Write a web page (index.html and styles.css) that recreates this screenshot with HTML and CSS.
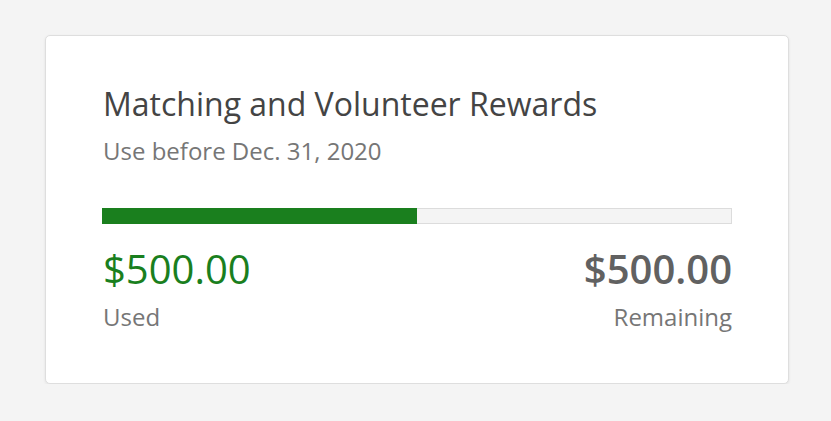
FILE: index.html
```html
<!DOCTYPE html>
<html lang="en">
<head>
<meta charset="utf-8">
<title>Rewards</title>
<link rel="stylesheet" href="styles.css">
</head>
<body>
<div class="page">
  <div class="card">
    <h2 class="card-title">Matching and Volunteer Rewards</h2>
    <p class="card-sub">Use before Dec. 31, 2020</p>
    <div class="meter">
      <div class="meter-fill" style="width: 50%"></div>
    </div>
    <div class="totals">
      <div class="total">
        <div class="amount used">$500.00</div>
        <div class="label">Used</div>
      </div>
      <div class="total right">
        <div class="amount remaining">$500.00</div>
        <div class="label">Remaining</div>
      </div>
    </div>
  </div>
</div>
</body>
</html>
```

FILE: styles.css
```css
html, body {
	margin: 0;
	padding: 0;
	background: #f4f4f4;
	font-family: "Open Sans", "Liberation Sans", sans-serif;
}
.page {
	padding: 35px 42px 0 45px;
}
.card {
	background: #fff;
	border: 1px solid #dedede;
	border-radius: 5px;
	box-shadow: 0 1px 3px rgba(0, 0, 0, 0.08);
	padding: 48px 56px 50px 56px;
}
.card-title {
	margin: 0;
	padding-left: 1px;
	font-size: 32px;
	font-weight: 400;
	line-height: 40px;
	color: #444;
}
.card-sub {
	margin: 11px 0 0 1px;
	font-size: 24px;
	line-height: 32px;
	color: #767676;
}
.meter {
	margin-top: 41px;
	height: 16px;
	background: #f4f4f4;
	box-shadow: inset 0 0 0 1px #dcdcdc;
}
.meter-fill {
	height: 100%;
	background: #1a7f1e;
}
.totals {
	display: flex;
	justify-content: space-between;
	margin-top: 21px;
}
.total {
	padding-left: 1px;
}
.right {
	text-align: right;
}
.amount {
	font-size: 40px;
	line-height: 48px;
}
.used {
	color: #1a7f1e;
}
.remaining {
	color: #616161;
	font-weight: 600;
}
.label {
	margin-top: 8px;
	font-size: 24px;
	line-height: 32px;
	color: #767676;
}
```
